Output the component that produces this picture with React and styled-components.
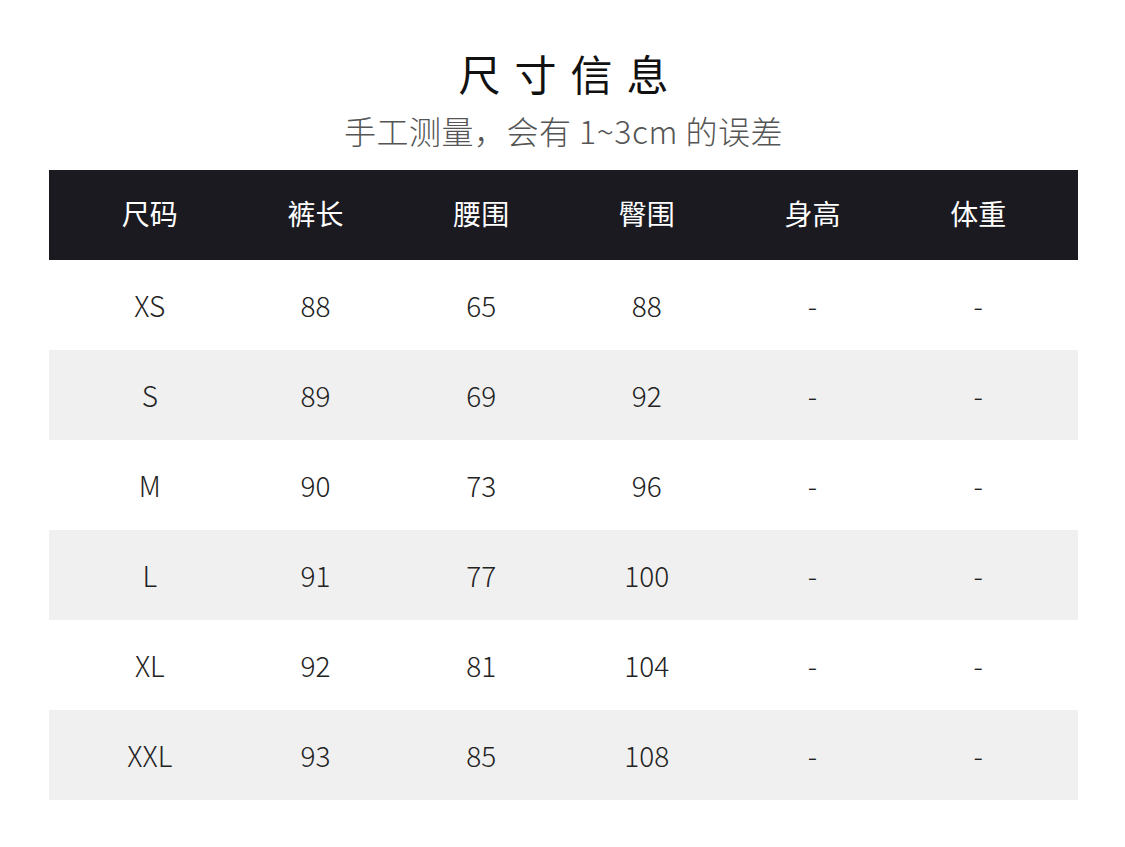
import React from 'react';
import styled, { createGlobalStyle } from 'styled-components';

const GlobalStyle = createGlobalStyle`
  body {
    margin: 0;
    background: #ffffff;
    font-family: "Noto Sans CJK SC", "Noto Sans", sans-serif;
  }
`;

const Page = styled.div`
  width: 1029px;
  margin-left: 49px;
  padding-top: 48px;
  display: flex;
  flex-direction: column;
  align-items: center;
`;

const Title = styled.h1`
  margin: 0;
  font-size: 42px;
  line-height: 50px;
  font-weight: 400;
  letter-spacing: 14px;
  margin-right: -14px;
  color: #111;
`;

const Subtitle = styled.p`
  margin: 12px 0 20px;
  font-size: 32px;
  line-height: 40px;
  font-weight: 300;
  letter-spacing: 0.5px;
  color: #555;
`;

const Table = styled.div`
  width: 100%;
  display: flex;
  flex-direction: column;
`;

const Row = styled.div`
  display: grid;
  grid-template-columns: repeat(6, 1fr);
  height: 90px;
  padding: 0 17px 0 18px;
  background: ${(p) => (p.$head ? '#1b1a21' : p.$shaded ? '#f0f0f0' : '#ffffff')};
  color: ${(p) => (p.$head ? '#ffffff' : '#222')};
`;

const Cell = styled.div`
  display: flex;
  align-items: center;
  justify-content: center;
  font-size: 28px;
  font-weight: ${(p) => (p.$head ? 400 : 300)};
  padding-bottom: ${(p) => (p.$head ? '5px' : '0')};
`;

const headers = ['尺码', '裤长', '腰围', '臀围', '身高', '体重'];

const rows = [
  ['XS', '88', '65', '88', '-', '-'],
  ['S', '89', '69', '92', '-', '-'],
  ['M', '90', '73', '96', '-', '-'],
  ['L', '91', '77', '100', '-', '-'],
  ['XL', '92', '81', '104', '-', '-'],
  ['XXL', '93', '85', '108', '-', '-'],
];

export default function App() {
  return (
    <>
      <GlobalStyle />
      <Page>
        <Title>尺寸信息</Title>
        <Subtitle>手工测量，会有 1~3cm 的误差</Subtitle>
        <Table>
          <Row $head>
            {headers.map((h) => (
              <Cell key={h} $head>{h}</Cell>
            ))}
          </Row>
          {rows.map((r, i) => (
            <Row key={r[0]} $shaded={i % 2 === 1}>
              {r.map((v, j) => (
                <Cell key={j}>{v}</Cell>
              ))}
            </Row>
          ))}
        </Table>
      </Page>
    </>
  );
}
